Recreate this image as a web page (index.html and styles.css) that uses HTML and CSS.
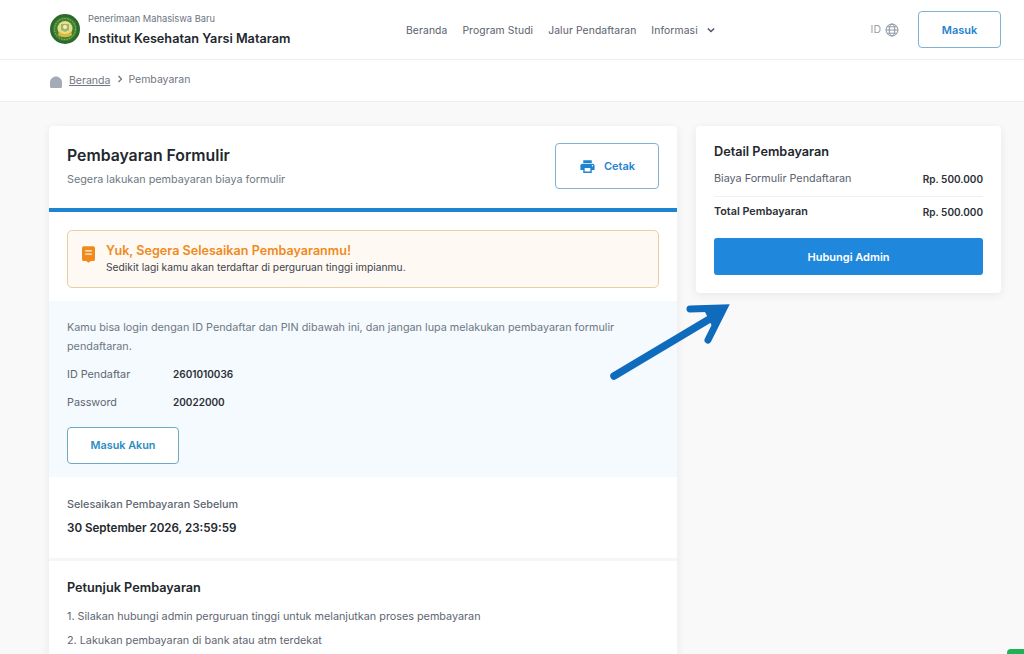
FILE: index.html
```html
<!DOCTYPE html>
<html lang="id">
<head>
<meta charset="utf-8">
<title>Pembayaran Formulir</title>
<link rel="stylesheet" href="styles.css">
</head>
<body>
<header class="topbar">
  <div class="brand">
    <svg class="logo" viewBox="0 0 30 30" aria-hidden="true">
      <circle cx="15" cy="15" r="15" fill="#2c6a2c"/>
      <circle cx="15" cy="15" r="12" fill="#3f8236"/>
      <circle cx="15" cy="15" r="10.500" fill="none" stroke="#b7c56a" stroke-width=".8" stroke-dasharray="1.500 1.200"/>
      <circle cx="15" cy="14.500" r="7.500" fill="#e6dd8a"/>
      <path d="M9 17c2 4 10 4 12 0l1 4c-3 3-11 3-14 0z" fill="#d9b93a"/>
      <path d="M11 10h8v6l-4 2-4-2z" fill="#9fb56a"/>
      <circle cx="15" cy="13" r="2" fill="#f4f0c0"/>
    </svg>
    <div class="brand-text">
      <div class="brand-sub">Penerimaan Mahasiswa Baru</div>
      <div class="brand-name">Institut Kesehatan Yarsi Mataram</div>
    </div>
  </div>
  <nav class="menu">
    <a>Beranda</a>
    <a>Program Studi</a>
    <a>Jalur Pendaftaran</a>
    <a class="menu-drop">Informasi
      <svg viewBox="0 0 10 6" class="chev" aria-hidden="true"><path d="M1 1l4 4 4-4" fill="none" stroke="#4a5568" stroke-width="1.800"/></svg>
    </a>
  </nav>
  <div class="top-right">
    <span class="lang">ID
      <svg viewBox="0 0 14 14" class="globe" aria-hidden="true"><g fill="none" stroke="#8b95a3" stroke-width="1"><circle cx="7" cy="7" r="6"/><ellipse cx="7" cy="7" rx="2.800" ry="6"/><path d="M1 7h12M2 3.800h10M2 10.200h10"/></g></svg>
    </span>
    <a class="btn btn-login">Masuk</a>
  </div>
</header>

<div class="crumbs">
  <svg viewBox="0 0 12 12" class="home" aria-hidden="true"><path d="M6 .5C9 .5 12 3 12 6v4.500a1.500 1.500 0 0 1-1.500 1.500h-9A1.500 1.500 0 0 1 0 10.500V6C0 3 3 .5 6 .5z" fill="#a3abb6"/></svg>
  <a class="crumb-link">Beranda</a>
  <svg viewBox="0 0 6 8" class="crumb-sep" aria-hidden="true"><path d="M1.500 1l3 3-3 3" fill="none" stroke="#6b7280" stroke-width="1.200"/></svg>
  <span class="crumb-now">Pembayaran</span>
</div>

<main class="page">
  <section class="card card-main">
    <div class="main-head">
      <div>
        <h1>Pembayaran Formulir</h1>
        <p class="muted-sub">Segera lakukan pembayaran biaya formulir</p>
      </div>
      <a class="btn btn-print">
        <svg viewBox="0 0 24 24" class="print" aria-hidden="true"><path fill="#1f84cf" d="M19 8H5c-1.660 0-3 1.340-3 3v6h4v4h12v-4h4v-6c0-1.660-1.340-3-3-3zm-3 11H8v-5h8v5zm3-7c-.55 0-1-.45-1-1s.45-1 1-1 1 .45 1 1-.45 1-1 1zm-1-9H6v4h12V3z"/></svg>
        Cetak
      </a>
    </div>
    <div class="rule-blue"></div>
    <div class="alert-wrap">
      <div class="alert">
        <svg viewBox="0 0 14 18" class="alert-icon" aria-hidden="true"><path fill="#f08a1d" d="M2 0h10a2 2 0 0 1 2 2v12a2 2 0 0 1-2 2H9.500L7 18l-2.500-2H2a2 2 0 0 1-2-2V2a2 2 0 0 1 2-2z"/><path d="M3.500 5h7M3.500 8.500h7" stroke="#fdf4e6" stroke-width="1.400"/></svg>
        <div>
          <div class="alert-title">Yuk, Segera Selesaikan Pembayaranmu!</div>
          <div class="alert-text">Sedikit lagi kamu akan terdaftar di perguruan tinggi impianmu.</div>
        </div>
      </div>
    </div>
    <div class="login-panel">
      <p class="login-note">Kamu bisa login dengan ID Pendaftar dan PIN dibawah ini, dan jangan lupa melakukan pembayaran formulir pendaftaran.</p>
      <div class="cred"><span class="cred-key">ID Pendaftar</span><b class="cred-val">2601010036</b></div>
      <div class="cred"><span class="cred-key">Password</span><b class="cred-val">20022000</b></div>
      <a class="btn btn-akun">Masuk Akun</a>
    </div>
    <div class="deadline">
      <div class="deadline-label">Selesaikan Pembayaran Sebelum</div>
      <div class="deadline-date">30 September 2026, 23:59:59</div>
    </div>
    <div class="guide">
      <h2>Petunjuk Pembayaran</h2>
      <p>1. Silakan hubungi admin perguruan tinggi untuk melanjutkan proses pembayaran</p>
      <p>2. Lakukan pembayaran di bank atau atm terdekat</p>
    </div>
  </section>

  <aside class="card card-side">
    <h3>Detail Pembayaran</h3>
    <div class="row row-first"><span>Biaya Formulir Pendaftaran</span><b>Rp. 500.000</b></div>
    <div class="row row-total"><strong>Total Pembayaran</strong><b>Rp. 500.000</b></div>
    <a class="btn-admin">Hubungi Admin</a>
  </aside>
</main>

<svg class="arrow" viewBox="0 0 120 80" aria-hidden="true">
  <path d="M4 72 L108 10" fill="none" stroke="#0f6cbd" stroke-width="7.500" stroke-linecap="round"/>
  <path d="M80 5 L114 4 L98 36" fill="none" stroke="#0f6cbd" stroke-width="7" stroke-linecap="round" stroke-linejoin="miter"/>
  <path d="M94 6 L113 5 L103 24z" fill="#0f6cbd"/>
</svg>
<div class="chat-corner"></div>
</body>
</html>
```
FILE: styles.css
```css
* { box-sizing: border-box; }
html, body { margin: 0; height: 654px; overflow: hidden; }
body {
  background: #f9f9f9;
  color: #2b2f36;
  font-family: "Inter", "Open Sans", "Liberation Sans", sans-serif;
  font-size: 11px;
  position: relative;
}
a { text-decoration: none; color: inherit; }
h1, h2, h3, p { margin: 0; }

.topbar {
  height: 60px;
  background: #fff;
  border-bottom: 1px solid #eceef0;
  display: flex;
  align-items: center;
  padding: 0 23px 0 50px;
}
.brand { display: flex; align-items: center; gap: 8px; width: 356px; }
.logo { width: 30px; height: 30px; margin-bottom: 1px; flex: none; }
.brand-sub { font-size: 9.300px; color: #6d7480; line-height: 13px; }
.brand-name { font-size: 12.700px; font-weight: 600; color: #23272e; line-height: 17px; margin-top: 5px; }
.menu { display: flex; align-items: center; gap: 15px; color: #59616d; font-size: 10.300px; letter-spacing: .12px; }
.menu-drop { display: flex; align-items: center; gap: 9px; }
.chev { width: 8px; height: 6px; }
.top-right { margin-left: auto; display: flex; align-items: center; gap: 19px; }
.lang { display: flex; align-items: center; gap: 4px; color: #9aa1ab; font-size: 10.500px; }
.globe { width: 14px; height: 14px; }
.btn {
  display: flex; align-items: center; justify-content: center;
  background: #fff; color: #1f84cf;
  border: 1px solid #7fb2d2; border-radius: 4px;
  font-weight: 600; font-size: 11px;
}
.btn-login { width: 83px; height: 37px; }

.crumbs {
  height: 42px;
  background: #fff;
  border-bottom: 1px solid #eceef0;
  display: flex; align-items: center;
  padding: 0 50px 2px;
  gap: 7px;
  color: #6f7783;
  font-size: 10.500px;
}
.home { width: 12px; height: 12px; margin-top: 5px; }
.crumb-link { text-decoration: underline; margin-top: 2px; }
.crumb-sep { width: 6px; height: 8px; margin-top: -1px; }
.crumb-now { margin-top: -1px; margin-left: -2px; }

.page { display: flex; align-items: flex-start; gap: 19px; padding: 24px 23px 0 49px; }
.card { background: #fff; border-radius: 4px; box-shadow: 0 2px 10px rgba(30, 40, 60, .08); }
.card-main { width: 628px; flex: none; overflow: hidden; }
.card-side { flex: 1; padding: 18px 18px 18px; height: 167px; }

.main-head { display: flex; justify-content: space-between; align-items: flex-start; padding: 17px 18px 18px; height: 82px; }
h1 { font-size: 15.800px; font-weight: 600; color: #23272e; line-height: 20px; margin-top: 3px; }
.muted-sub { font-size: 10.800px; color: #6f7783; line-height: 14px; margin-top: 7px; }
.btn-print { width: 104px; height: 46px; gap: 8px; }
.print { width: 17px; height: 17px; }
.rule-blue { height: 4px; background: #1f84cf; }

.alert-wrap { padding: 18px 18px 13px; }
.alert {
  height: 58px;
  display: flex; align-items: center; gap: 11px;
  padding: 0 14px;
  background: #fef9f2;
  border: 1.500px solid #e9cf9f;
  border-radius: 5px;
}
.alert-icon { width: 13px; height: 17px; margin-top: -9px; flex: none; }
.alert-title { font-size: 12.600px; font-weight: 600; color: #f08a1d; line-height: 16px; margin-top: -1px; }
.alert-text { font-size: 10.250px; color: #3d434c; line-height: 14px; margin-top: 1px; }

.login-panel { height: 176px; background: #f4fafe; padding: 17px 18px 0; color: #6f7783; font-size: 10.800px; }
.login-note { line-height: 19px; }
.cred { display: flex; align-items: center; height: 28px; }
.cred:first-of-type { margin-top: 4px; }
.cred-key { width: 106px; color: #5e6671; }
.cred-val { color: #2b2f36; font-weight: 600; font-size: 10px; }
.btn-akun { width: 112px; height: 37px; margin-top: 11px; background: #fff; color: #2b8cc0; border-color: #6fa9c4; font-size: 10.800px; }

.deadline { height: 84px; padding-top: 21px; border-bottom: 3px solid #f6f6f6; padding-left: 18px; }
.deadline-label { font-size: 10.800px; color: #5e6671; font-weight: 500; line-height: 14px; }
.deadline-date { font-size: 11.600px; font-weight: 600; color: #23272e; line-height: 16px; margin-top: 8px; }
.guide { padding: 19px 18px 0; }
h2 { font-size: 12.700px; font-weight: 600; color: #23272e; line-height: 16px; margin-bottom: 14px; }
.guide p { font-size: 10.800px; color: #5e6671; line-height: 14px; margin-bottom: 10px; }

h3 { font-size: 12.700px; font-weight: 600; color: #23272e; line-height: 16px; }
.row { display: flex; justify-content: space-between; align-items: center; font-size: 10.800px; color: #59616d; }
.row b { color: #2b2f36; font-weight: 600; font-size: 10px; }
.row strong { color: #2b2f36; font-weight: 600; }
.row-first { height: 37px; padding-top: 1px; border-bottom: 1px solid #eef0f2; }
.row-total { height: 29px; }
.btn-admin {
  display: flex; align-items: center; justify-content: center;
  height: 37px; margin-top: 12px;
  background: #1f88dc; color: #fff;
  border-radius: 3px; font-weight: 600; font-size: 11px;
}

.arrow { position: absolute; left: 610px; top: 304px; width: 120px; height: 80px; }
.chat-corner { position: absolute; right: 0; bottom: 0; width: 17px; height: 5px; background: #1fb155; border-top-left-radius: 4px; }
```
